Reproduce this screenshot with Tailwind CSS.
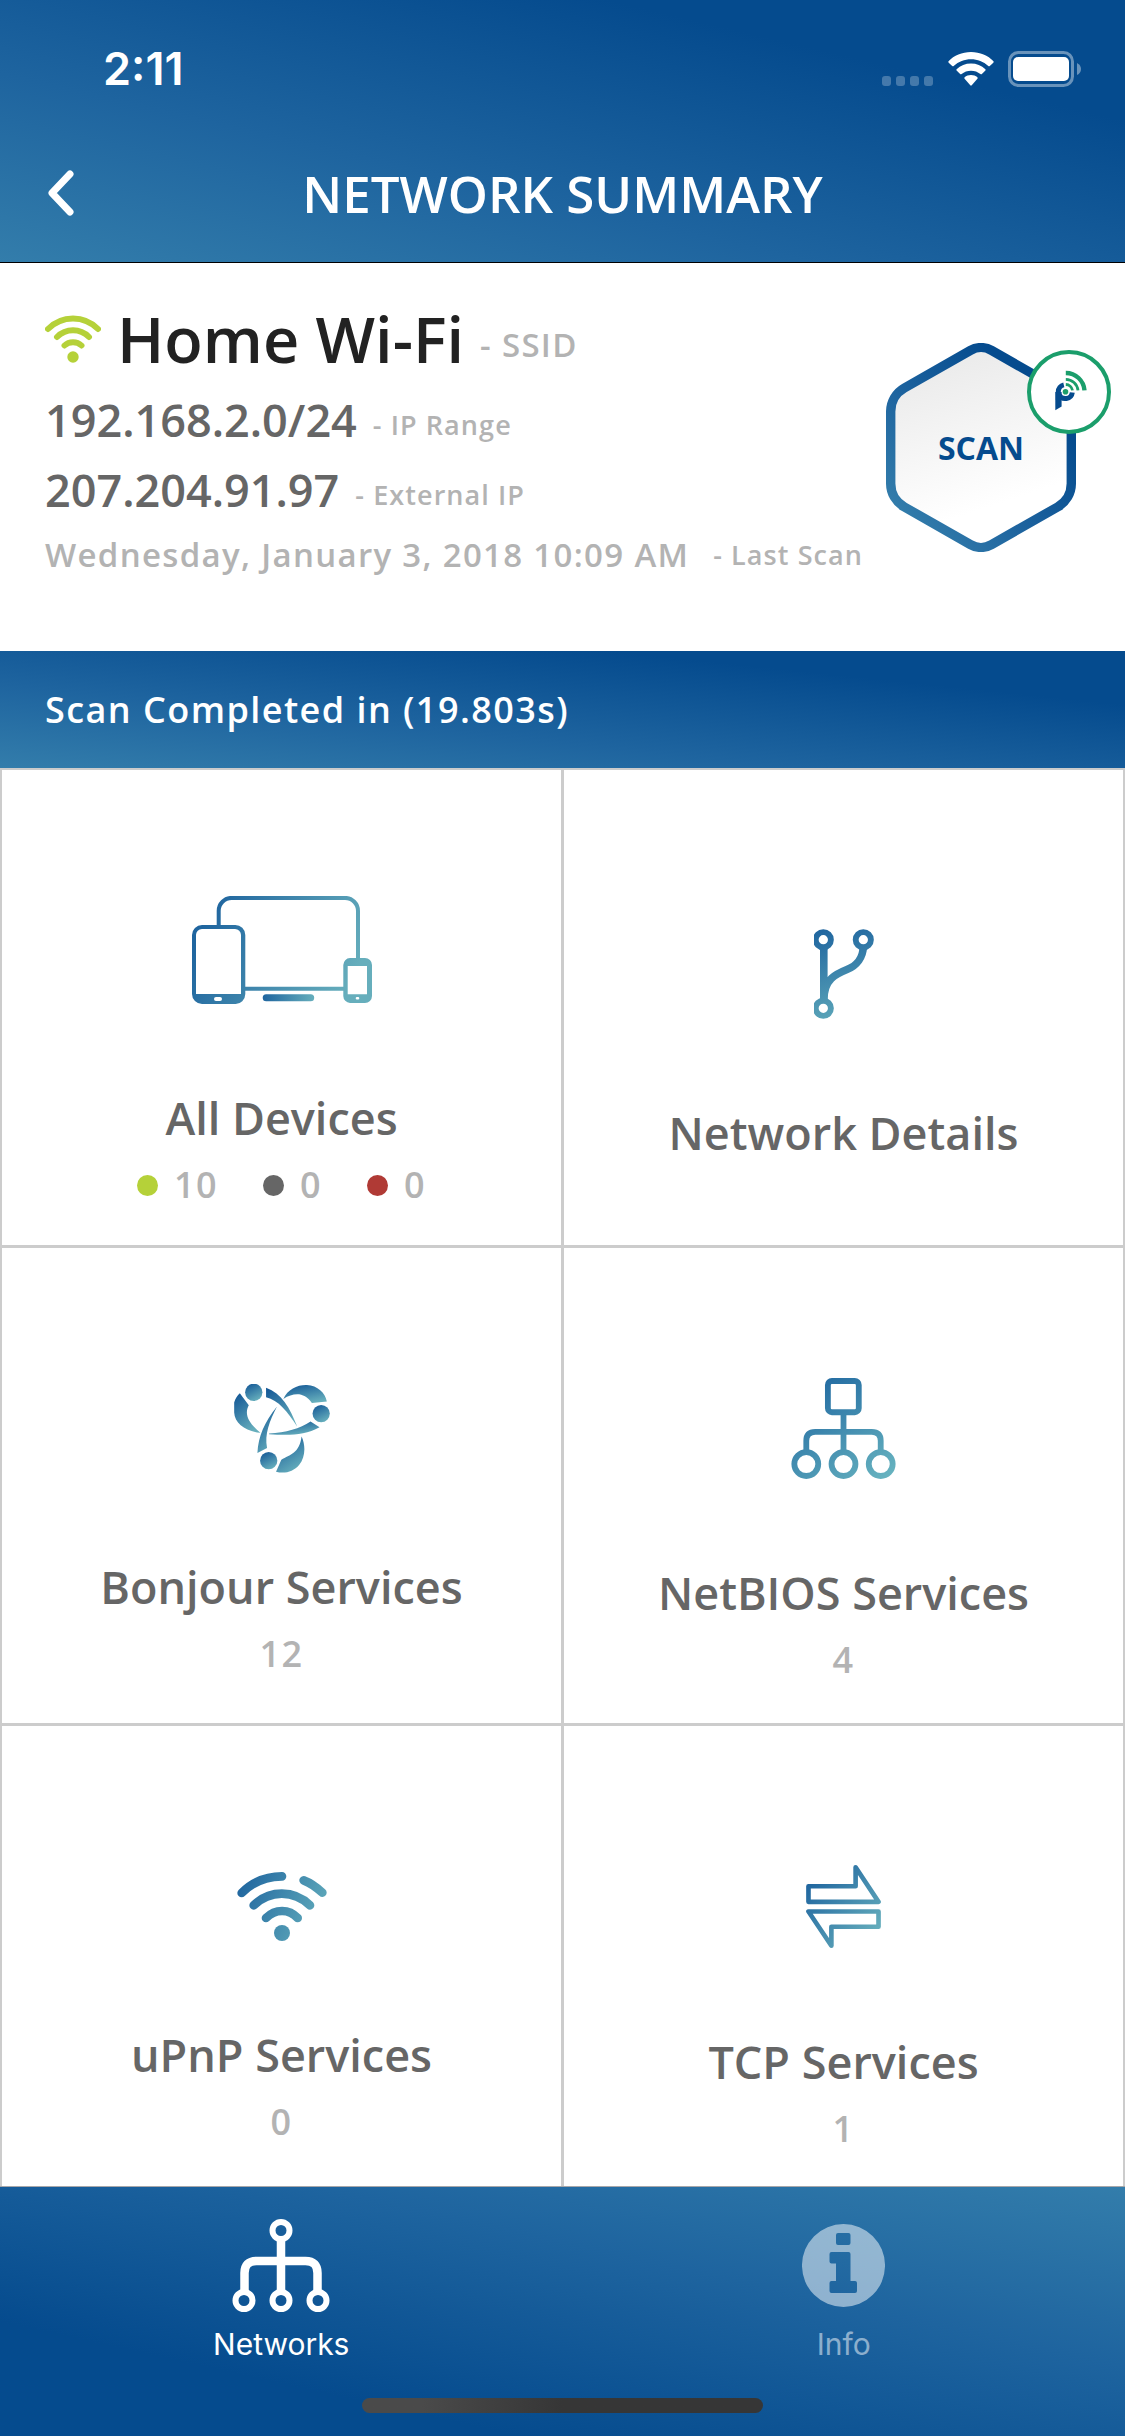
<!DOCTYPE html>
<html lang="en">
<head>
    <meta charset="UTF-8">
    <meta name="viewport" content="width=device-width, initial-scale=1.0">
    <title>Network Summary</title>
    <script src="https://cdn.jsdelivr.net/npm/@tailwindcss/browser@4"></script>
</head>
<body class="flex h-screen flex-col overflow-hidden bg-white font-['Open_Sans',sans-serif] font-semibold text-[#666]">

    <!-- Header -->
    <header class="border-b border-black bg-[linear-gradient(to_top_right,#337dab_0%,#1e649f_36%,#054b8e_77%)] pb-[6px] text-white">
        <!-- Status bar -->
        <div class="flex h-[130px] items-center justify-between pt-2 pr-[44px] pl-[103px]">
            <span class="font-['Inter',sans-serif] text-[45px]">2:11</span>
            <div class="flex items-center gap-[14px]">
                <svg class="mt-6 h-[10px] w-[52px] fill-white/25" viewBox="0 0 52 10">
                    <rect width="9" height="10" rx="3"/>
                    <rect x="14" width="9" height="10" rx="3"/>
                    <rect x="28" width="9" height="10" rx="3"/>
                    <rect x="42" width="9" height="10" rx="3"/>
                </svg>
                <svg class="h-[34px] w-[46px] fill-white" viewBox="0 0 46 34">
                    <path d="M23 0C32 0 40 3.500 45.500 9.200Q46 10 45.300 10.700L41.800 14Q41 14.600 40.300 14C35.500 9.700 29.500 7.300 23 7.300S10.500 9.700 5.700 14Q5 14.600 4.200 14L.7 10.700Q0 10 .5 9.200C6 3.500 14 0 23 0Z"/>
                    <path d="M23 11.600C28.500 11.600 33.500 13.600 37.400 17.200Q38 18 37.400 18.600L33.900 22Q33.200 22.600 32.400 22C29.800 19.900 26.600 18.700 23 18.700S16.200 19.900 13.600 22Q12.800 22.600 12.100 22L8.600 18.600Q8 18 8.600 17.200C12.500 13.600 17.500 11.600 23 11.600Z"/>
                    <path d="M23 23C25.500 23 27.700 23.900 29.400 25.300Q30 26 29.400 26.700L23.700 33.300Q23 34 22.300 33.300L16.600 26.700Q16 26 16.600 25.300C18.300 23.900 20.500 23 23 23Z"/>
                </svg>
                <svg class="h-[36px] w-[73px]" viewBox="0 0 73 36">
                    <rect x="1.500" y="1.500" width="63" height="33" rx="9" fill="none" stroke="white" stroke-opacity=".4" stroke-width="3"/>
                    <rect x="5" y="6" width="56" height="24" rx="5" fill="white"/>
                    <path d="M69 12Q73 14 73 18T69 24Z" fill="white" fill-opacity=".4"/>
                </svg>
            </div>
        </div>
        <!-- Title bar -->
        <div class="grid h-[126px] grid-cols-[100px_1fr_100px] items-center">
            <button type="button" aria-label="Back" class="pl-[48px]">
                <svg class="h-[46px] w-[26px]" viewBox="0 0 26 46" fill="none" stroke="white" stroke-width="7" stroke-linecap="round" stroke-linejoin="round">
                    <path d="M22 4L4 23L22 42"/>
                </svg>
            </button>
            <h1 class="text-center text-[51px]">NETWORK SUMMARY</h1>
        </div>
    </header>

    <!-- Current network -->
    <section class="flex items-start justify-between pt-[44px] pr-[14px] pb-[66px] pl-[45px]">
        <div class="whitespace-nowrap text-[#b3b3b3]">
            <div class="mb-[14px] flex items-end">
                <svg class="mr-4 mb-2 h-[48px] w-[56px]" viewBox="0 0 56 48" fill="none" stroke="#b5d139" stroke-width="6" stroke-linecap="round">
                    <path d="M3 14C17 0 39 0 53 14M12 22C21 13 35 13 44 22M19.500 30.500C24 26 32 26 36.500 30.500"/>
                    <circle cx="28" cy="42" r="5.700" fill="#b5d139" stroke="none"/>
                </svg>
                <h2 class="mr-4 text-[63px] leading-[64px] text-[#222]">Home Wi-Fi</h2>
                <span class="text-[33px] leading-[52px] tracking-[0.04em]">- SSID</span>
            </div>
            <div class="flex items-end">
                <span class="mr-4 text-[45px] leading-[70px] text-[#666]">192.168.2.0/24</span>
                <span class="text-[27px] leading-[60px] tracking-[0.04em]">- IP Range</span>
            </div>
            <div class="flex items-end">
                <span class="mr-4 text-[45px] leading-[70px] text-[#666]">207.204.91.97</span>
                <span class="text-[27px] leading-[60px] tracking-[0.04em]">- External IP</span>
            </div>
            <div class="flex items-end">
                <span class="mr-6 text-[33px] leading-[60px] tracking-[0.04em]">Wednesday, January 3, 2018 10:09 AM</span>
                <span class="text-[27px] leading-[60px] tracking-[0.04em]">- Last Scan</span>
            </div>
        </div>

        <!-- Scan button with the plugin badge over its corner -->
        <button type="button" class="relative mt-[36px] mr-[35px] -ml-2 grid h-[209px] w-[190px] shrink-0 place-items-center">
            <svg class="col-start-1 row-start-1 h-[209px] w-[190px]" viewBox="0 0 190 209">
                <defs>
                    <linearGradient id="hexEdge" x1="0" y1="1" x2="1" y2="0">
                        <stop offset="0.1" stop-color="#337dab"/>
                        <stop offset="0.4" stop-color="#1e649f"/>
                        <stop offset="0.77" stop-color="#054b8e"/>
                    </linearGradient>
                    <linearGradient id="hexFill" x1="0.3" y1="0" x2="0.6" y2="1">
                        <stop offset="0.1" stop-color="#ececec"/>
                        <stop offset="0.8" stop-color="#fff"/>
                    </linearGradient>
                </defs>
                <path d="M4.700 68.700A27 27 0 0 1 18.400 45L84.500 7.400A21 21 0 0 1 105.500 7.400L171.600 45A27 27 0 0 1 185.300 68.700V140.300A27 27 0 0 1 171.600 164L105.500 201.600A21 21 0 0 1 84.500 201.600L18.400 164A27 27 0 0 1 4.700 140.300Z" fill="url(#hexFill)" stroke="url(#hexEdge)" stroke-width="9.400"/>
            </svg>
            <span class="col-start-1 row-start-1 text-[32px] font-bold text-[#054b8e]">SCAN</span>
            <svg class="absolute top-[7px] -right-[35px] h-[84px] w-[84px]" viewBox="0 0 84 84" fill="none">
                <circle cx="42" cy="42" r="40" fill="white" stroke="#1b9e6b" stroke-width="4"/>
                <path d="M31.300 50V41.700A7 7 0 0 1 36.800 34.900M32 44.500A7 7 0 0 0 45.300 42.500" stroke="#054b8e" stroke-width="5"/>
                <path d="M28.300 60.200V42H34.600V56.400Z" fill="#054b8e"/>
                <circle cx="38.500" cy="41.700" r="2.800" fill="#1b9e6b"/>
                <path d="M38.800 34.500A7 7 0 0 1 45.500 40.400M38.800 29.300A12.500 12.500 0 0 1 51 40.400" stroke="#1b9e6b" stroke-width="2.800"/>
                <path d="M38.800 23A18.700 18.700 0 0 1 57.500 40.400" stroke="#1b9e6b" stroke-width="4.400"/>
            </svg>
        </button>
    </section>

    <!-- Scan result -->
    <p class="bg-[linear-gradient(to_top_right,#337dab_0%,#1e649f_36%,#054b8e_77%)] pl-[45px] text-[36px] leading-[117px] tracking-[0.04em] text-white">Scan Completed in (19.803s)</p>

    <!-- Tiles -->
    <main class="min-h-0 flex-1 overflow-hidden">
        <div class="grid grid-cols-2 gap-[3px] bg-[#ccc] p-[2px] text-center">
            <a href="#" class="flex min-h-[475px] flex-col items-center justify-center bg-white pt-[90px]">
                <svg class="h-[108px] w-[180px]" viewBox="0 0 180 108" fill="none">
                    <defs>
                        <linearGradient id="devices" gradientUnits="userSpaceOnUse" x1="20" y1="10" x2="165" y2="75">
                            <stop stop-color="#1f659f"/>
                            <stop offset="1" stop-color="#66aebc"/>
                        </linearGradient>
                        <linearGradient id="stand">
                            <stop stop-color="#1f659f"/>
                            <stop offset="1" stop-color="#66aebc"/>
                        </linearGradient>
                    </defs>
                    <path d="M26.700 31V15A13 13 0 0 1 39.700 1.900H153A13 13 0 0 1 166 15V64M52 92.700H153" stroke="url(#devices)" stroke-width="4"/>
                    <rect x="70.700" y="98.300" width="51.500" height="7" rx="3.500" fill="url(#stand)"/>
                    <path fill-rule="evenodd" fill="url(#devices)" d="M10 29H43A10 10 0 0 1 53.300 39V98A10 10 0 0 1 43 108H10A10 10 0 0 1 0 98V39A10 10 0 0 1 10 29ZM10 33A6 6 0 0 0 4 39V98H49V39A6 6 0 0 0 43 33ZM24 101A2 2 0 0 0 24 105H28A2 2 0 0 0 28 101Z"/>
                    <path fill-rule="evenodd" fill="url(#devices)" d="M158 62H173A7 7 0 0 1 180 69V100A7 7 0 0 1 173 107H158A7 7 0 0 1 151.300 100V69A7 7 0 0 1 158 62ZM155.700 70V98.300H175V70ZM165 101A1.300 1.300 0 0 0 165 103.600H166A1.300 1.300 0 0 0 166 101Z"/>
                </svg>
                <span class="mt-[71px] text-[45px] leading-[86px]">All Devices</span>
                <span class="flex gap-[45px] text-[36px] leading-[48px] tracking-[0.04em] text-[#b3b3b3]">
                    <span class="flex items-center gap-4"><i class="size-[21px] rounded-full bg-[#b5d139]"></i>10</span>
                    <span class="flex items-center gap-4"><i class="size-[21px] rounded-full bg-[#666]"></i>0</span>
                    <span class="flex items-center gap-4"><i class="size-[21px] rounded-full bg-[#b03a35]"></i>0</span>
                </span>
            </a>

            <a href="#" class="flex min-h-[475px] flex-col items-center justify-center bg-white pt-[90px]">
                <svg class="h-[90px] w-[60px]" viewBox="0 0 60 90" fill="none" stroke="url(#branch)">
                    <defs>
                        <linearGradient id="branch" gradientUnits="userSpaceOnUse" x1="5" y1="0" x2="30" y2="95">
                            <stop stop-color="#1f659f"/>
                            <stop offset="1" stop-color="#5fa9ba"/>
                        </linearGradient>
                    </defs>
                    <g stroke-width="5.900">
                        <circle cx="9.300" cy="10.700" r="7.600"/>
                        <circle cx="49.300" cy="10.700" r="7.600"/>
                        <circle cx="9.300" cy="79.300" r="7.600"/>
                    </g>
                    <path d="M9.800 18V72M10 70C10 50 22 45 33 40.500C43 36.500 49 28 49.300 18" stroke-width="7.600"/>
                </svg>
                <span class="mt-[71px] text-[45px] leading-[86px]">Network Details</span>
            </a>

            <a href="#" class="flex min-h-[475px] flex-col items-center justify-center bg-white pt-[90px]">
                <svg class="h-[89px] w-[96px]" viewBox="429 99 288 268" fill="url(#bonjour)">
                    <defs>
                        <linearGradient id="bonjour" x1="0.1" y1="0" x2="0.6" y2="1">
                            <stop stop-color="#135796"/>
                            <stop offset="1" stop-color="#66aebc"/>
                        </linearGradient>
                    </defs>
                    <circle cx="488" cy="124" r="26"/>
                    <circle cx="691" cy="188" r="26"/>
                    <circle cx="533" cy="330" r="26"/>
                    <path d="M446 127L473 163C460 188 468 212 508 246C466 243 430 218 429 185V155C432 143 439 134 446 127Z"/>
                    <path d="M525 110C572 127 597 170 619 228C590 183 562 147 525 139Z"/>
                    <path d="M577 144C590 115 620 101 648 102C680 104 703 125 708 152L663 156C640 124 610 124 577 144Z"/>
                    <path d="M534 248C585 245 627 234 659 212L686 229C640 255 590 254 534 250Z"/>
                    <path d="M632 257C645 285 643 320 625 342C607 364 580 370 555 363L571 327C598 311 625 308 632 257Z"/>
                    <path d="M558 167C535 212 520 250 528 292L499 307C502 255 520 215 558 167Z"/>
                </svg>
                <span class="mt-[71px] text-[45px] leading-[86px]">Bonjour Services</span>
                <span class="text-[36px] leading-[48px] tracking-[0.04em] text-[#b3b3b3]">12</span>
            </a>

            <a href="#" class="flex min-h-[475px] flex-col items-center justify-center bg-white pt-[90px]">
                <svg class="h-[101px] w-[105px]" viewBox="456 81 316 304" fill="none" stroke="url(#tree)" stroke-width="17.500">
                    <defs>
                        <linearGradient id="tree" gradientUnits="userSpaceOnUse" x1="530" y1="80" x2="740" y2="380">
                            <stop stop-color="#2169a1"/>
                            <stop offset="1" stop-color="#66b2bf"/>
                        </linearGradient>
                    </defs>
                    <rect x="567" y="90" width="93" height="94" rx="12"/>
                    <path d="M614 184V302M502 302V270Q502 243 529 243H699Q726 243 726 270V302"/>
                    <circle cx="502" cy="340" r="36"/>
                    <circle cx="614" cy="340" r="36"/>
                    <circle cx="726" cy="340" r="36"/>
                </svg>
                <span class="mt-[71px] text-[45px] leading-[86px]">NetBIOS Services</span>
                <span class="text-[36px] leading-[48px] tracking-[0.04em] text-[#b3b3b3]">4</span>
            </a>

            <a href="#" class="flex min-h-[475px] flex-col items-center justify-center bg-white pt-[90px]">
                <svg class="h-[69px] w-[90px]" viewBox="407 96 270 207" fill="none" stroke="url(#waves)" stroke-width="26" stroke-linecap="round">
                    <defs>
                        <linearGradient id="waves" gradientUnits="userSpaceOnUse" x1="420" y1="110" x2="660" y2="230">
                            <stop stop-color="#1f659f"/>
                            <stop offset="1" stop-color="#5fa9ba"/>
                        </linearGradient>
                    </defs>
                    <path d="M421 159C455 125 500 109 542 109M607 121C628 129 648 144 663 158M457 196C505 149 578 149 626 196M494 234C522 206 563 206 589 234"/>
                    <circle cx="542" cy="279" r="24" fill="url(#waves)" stroke="none"/>
                </svg>
                <span class="mt-[71px] text-[45px] leading-[86px]">uPnP Services</span>
                <span class="text-[36px] leading-[48px] tracking-[0.04em] text-[#b3b3b3]">0</span>
            </a>

            <a href="#" class="flex min-h-[475px] flex-col items-center justify-center bg-white pt-[90px]">
                <svg class="h-[83px] w-[75px]" viewBox="411 71 225 250" fill="none" stroke="url(#arrows)" stroke-width="14" stroke-linejoin="round">
                    <defs>
                        <linearGradient id="arrows" gradientUnits="userSpaceOnUse" x1="430" y1="110" x2="620" y2="280">
                            <stop stop-color="#1f659f"/>
                            <stop offset="1" stop-color="#66aebc"/>
                        </linearGradient>
                    </defs>
                    <path d="M418 135H560V78L629 182H418ZM629 211V257H487V314L418 211Z"/>
                </svg>
                <span class="mt-[71px] text-[45px] leading-[86px]">TCP Services</span>
                <span class="text-[36px] leading-[48px] tracking-[0.04em] text-[#b3b3b3]">1</span>
            </a>
        </div>
    </main>

    <!-- Tab bar -->
    <footer class="border-t border-[#a7a7aa] bg-[linear-gradient(to_bottom_left,#337dab_0%,#1e649f_36%,#054b8e_77%)] pb-[23px] font-['Inter',sans-serif] text-[30px] leading-[36px] font-normal">
        <nav class="grid h-[211px] grid-cols-2 text-center text-white">
            <a href="#" aria-current="page" class="flex flex-col items-center pt-8">
                <svg class="mb-[14px] h-[93px] w-[98px]" viewBox="0 0 98 93" fill="none" stroke="white">
                    <g stroke-width="6">
                        <circle cx="49" cy="11.500" r="8.500"/>
                        <circle cx="12" cy="81.500" r="8.500"/>
                        <circle cx="49" cy="81.500" r="8.500"/>
                        <circle cx="86" cy="81.500" r="8.500"/>
                    </g>
                    <path d="M49 20V73M12.500 73V54Q12.500 42 24.500 42H73.500Q85.500 42 85.500 54V73" stroke-width="8.500"/>
                </svg>
                Networks
            </a>
            <a href="#" class="flex flex-col items-center pt-[37px] text-white/50">
                <svg class="mb-[19px] h-[83px] w-[83px] fill-white/50" viewBox="0 0 83 83">
                    <path fill-rule="evenodd" d="M41.500 0A41.500 41.500 0 1 1 41.500 83A41.500 41.500 0 1 1 41.500 0ZM36 9Q34 9 34 11V19Q34 21 36 21H46.500Q48.500 21 48.500 19V11Q48.500 9 46.500 9ZM29.500 28Q27.500 28 27.500 30V37.500Q27.500 39.500 29.500 39.500H34V57H29.500Q27.500 57 27.500 59V67Q27.500 69 29.500 69H53Q55 69 55 67V59Q55 57 53 57H48.500V30Q48.500 28 46.500 28Z"/>
                </svg>
                Info
            </a>
        </nav>
        <div class="mx-auto h-[15px] w-[401px] rounded-full bg-linear-to-r from-[#4a4a4a] from-15% to-[#363636] to-50%"></div>
    </footer>

</body>
</html>
